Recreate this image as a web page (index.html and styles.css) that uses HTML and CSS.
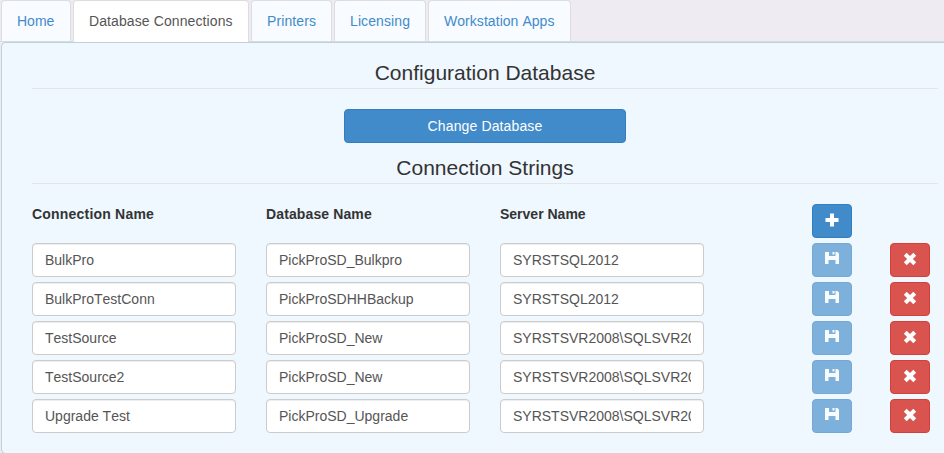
FILE: index.html
```html
<!DOCTYPE html>
<html lang="en">
<head>
<meta charset="utf-8">
<title>Database Connections</title>
<link rel="stylesheet" href="styles.css">
</head>
<body>
<svg class="defs" width="0" height="0" aria-hidden="true">
  <symbol id="plus" viewBox="0 0 14 14"><path d="M5 .5h4V5h4.500v4H9v4.500H5V9H.5V5H5z"/></symbol>
  <symbol id="save" viewBox="0 0 14 14"><path fill-rule="evenodd" d="M0 1h4v4h6.500V1h2L14 2.500V13h-3.500V9h-7v4H0zM7.500 1h2v2.500h-2z"/></symbol>
  <symbol id="remove" viewBox="0 0 14 14"><path d="M3.700.8 7 4.100 10.300.8 13.200 3.700 9.900 7l3.300 3.300-2.900 2.900L7 9.900l-3.300 3.300L.8 10.300 4.100 7 .8 3.700z"/></symbol>
</svg>
<ul class="tabs">
  <li class="tab tab-home"><a>Home</a></li>
  <li class="tab tab-database active"><a>Database Connections</a></li>
  <li class="tab tab-printers"><a>Printers</a></li>
  <li class="tab tab-licensing"><a>Licensing</a></li>
  <li class="tab tab-apps"><a>Workstation Apps</a></li>
</ul>
<main class="panel">
  <h2 class="legend">Configuration Database</h2>
  <button class="btn primary change">Change Database</button>
  <h2 class="legend">Connection Strings</h2>
  <div class="connections">
    <div class="row head">
      <strong class="wide">Connection Name</strong><strong>Database Name</strong><strong class="narrow">Server Name</strong>
      <button class="btn primary" aria-label="Add"><svg class="icon"><use href="#plus"/></svg></button>
    </div>
    <div class="row">
      <input value="BulkPro"><input value="PickProSD_Bulkpro"><input value="SYRSTSQL2012">
      <button class="btn primary" disabled><svg class="icon save"><use href="#save"/></svg></button>
      <button class="btn danger"><svg class="icon"><use href="#remove"/></svg></button>
    </div>
    <div class="row">
      <input value="BulkProTestConn"><input value="PickProSDHHBackup"><input value="SYRSTSQL2012">
      <button class="btn primary" disabled><svg class="icon save"><use href="#save"/></svg></button>
      <button class="btn danger"><svg class="icon"><use href="#remove"/></svg></button>
    </div>
    <div class="row">
      <input value="TestSource"><input value="PickProSD_New"><input value="SYRSTSVR2008\SQLSVR2008">
      <button class="btn primary" disabled><svg class="icon save"><use href="#save"/></svg></button>
      <button class="btn danger"><svg class="icon"><use href="#remove"/></svg></button>
    </div>
    <div class="row">
      <input value="TestSource2"><input value="PickProSD_New"><input value="SYRSTSVR2008\SQLSVR2008">
      <button class="btn primary" disabled><svg class="icon save"><use href="#save"/></svg></button>
      <button class="btn danger"><svg class="icon"><use href="#remove"/></svg></button>
    </div>
    <div class="row">
      <input value="Upgrade Test"><input value="PickProSD_Upgrade"><input value="SYRSTSVR2008\SQLSVR2008">
      <button class="btn primary" disabled><svg class="icon save"><use href="#save"/></svg></button>
      <button class="btn danger"><svg class="icon"><use href="#remove"/></svg></button>
    </div>
  </div>
</main>
</body>
</html>
```
FILE: styles.css
```css
* { box-sizing: border-box; }
html { overflow: hidden; }
body {
  margin: 0;
  height: 453px;
  overflow: hidden;
  background: #eeecf2;
  color: #333;
  font: 14px/20px "Liberation Sans", Arial, sans-serif;
  font-kerning: none;
}
.defs { display: none; }
.tabs {
  display: flex;
  gap: 2px;
  height: 42px;
  margin: 0;
  padding: 0 0 0 1px;
  list-style: none;
  border-bottom: 1px solid #d5dde1;
}
.tab {
  height: 41px;
  padding: 10px 0 0 15px;
  border: 1px solid #ddd;
  border-bottom: 0;
  border-radius: 4px 4px 0 0;
  background: #f8fbff;
  color: #428bca;
  letter-spacing: .1px;
  white-space: nowrap;
}
.tab.active { height: 42px; background: #fff; color: #555; }
.tab-home { width: 70px; letter-spacing: 0; }
.tab-database { width: 176px; }
.tab-printers { width: 81px; }
.tab-licensing { width: 92px; }
.tab-apps { width: 143px; letter-spacing: .05px; }
.panel {
  height: 412px;
  margin-left: 1px;
  padding: 17px 6px 0 30px;
  border: 1px solid #bfd0da;
  border-right: 0;
  border-radius: 5px 0 0 5px;
  background: #eff7ff;
}
.legend {
  height: 29px;
  margin: 0;
  border-bottom: 1px solid #e5e5e5;
  font-size: 21px;
  font-weight: 400;
  line-height: 26px;
  text-align: center;
}
.btn {
  display: flex;
  align-items: center;
  justify-content: center;
  width: 40px;
  height: 34px;
  padding: 0;
  border: 1px solid #357ebd;
  border-radius: 4px;
  background: #428bca;
  color: #fff;
  font: inherit;
  font-kerning: none;
}
.btn.danger { border-color: #d43f3a; background: #d9534f; }
.btn:disabled { opacity: .65; }
.change { width: 282px; margin: 20px auto 12px; letter-spacing: .13px; }
.connections { display: grid; gap: 5px; margin-top: 20px; }
.row {
  display: grid;
  grid-template-columns: 204px 30px 204px 30px 204px 108px 40px 38px 40px;
  height: 34px;
}
.row > :nth-child(1) { grid-column: 1; }
.row > :nth-child(2) { grid-column: 3; }
.row > :nth-child(3) { grid-column: 5; }
.row > :nth-child(4) { grid-column: 7; }
.row > :nth-child(5) { grid-column: 9; }
.head strong { letter-spacing: .12px; }
.head .wide { letter-spacing: .2px; }
.head .narrow { letter-spacing: 0; }
input {
  width: 204px;
  height: 34px;
  padding: 6px 12px;
  border: 1px solid #ccc;
  border-radius: 4px;
  background: #fff;
  box-shadow: inset 0 1px 1px rgba(0, 0, 0, .075);
  color: #555;
  font: inherit;
  font-kerning: none;
}
.icon { width: 14px; height: 14px; margin-top: -2px; fill: #fff; }
.save { margin-top: -4px; }
```
